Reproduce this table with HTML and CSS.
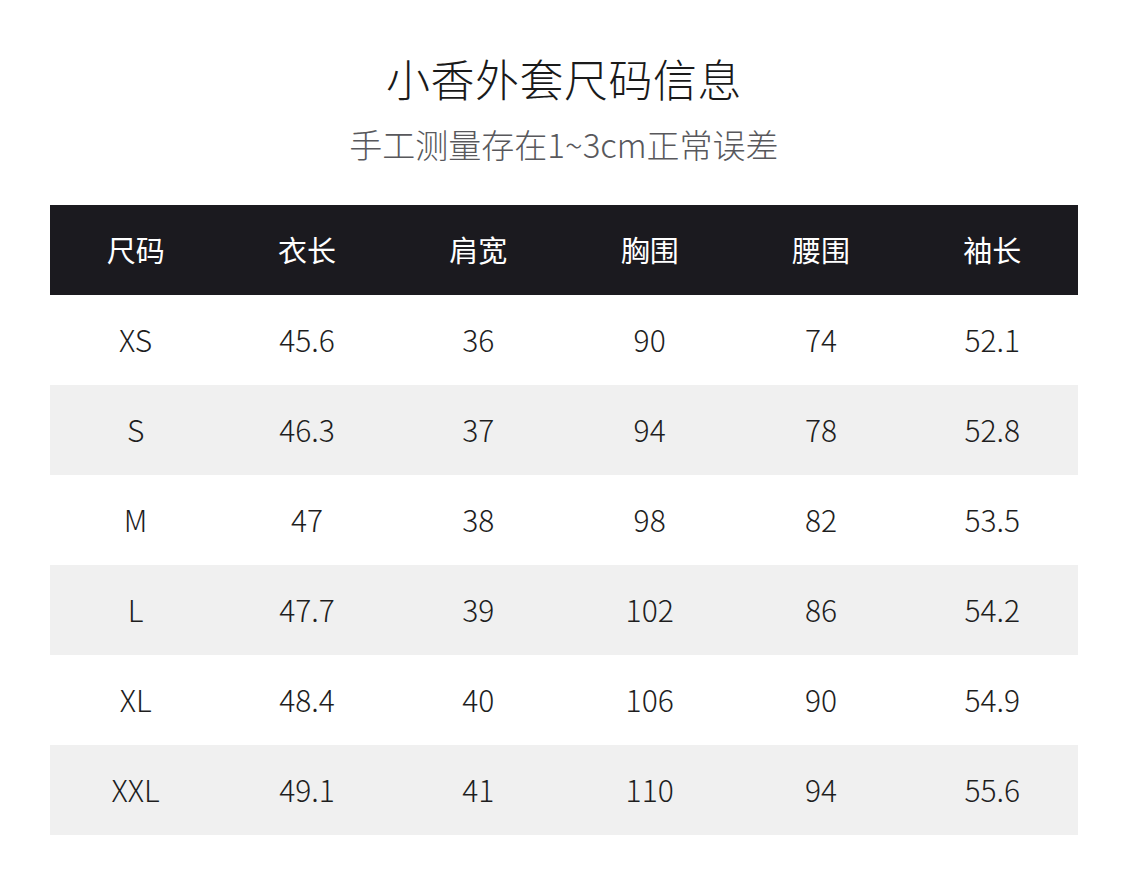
FILE: index.html
```html
<!DOCTYPE html>
<html lang="zh-CN">
<head>
<meta charset="utf-8">
<link rel="stylesheet" href="styles.css">
</head>
<body>
<div class="page">
  <h1 class="title">小香外套尺码信息</h1>
  <p class="subtitle">手工测量存在1~3cm正常误差</p>
  <div class="table">
    <div class="row head"><span>尺码</span><span>衣长</span><span>肩宽</span><span>胸围</span><span>腰围</span><span>袖长</span></div>
    <div class="row"><span>XS</span><span>45.6</span><span>36</span><span>90</span><span>74</span><span>52.1</span></div>
    <div class="row alt"><span>S</span><span>46.3</span><span>37</span><span>94</span><span>78</span><span>52.8</span></div>
    <div class="row"><span>M</span><span>47</span><span>38</span><span>98</span><span>82</span><span>53.5</span></div>
    <div class="row alt"><span>L</span><span>47.7</span><span>39</span><span>102</span><span>86</span><span>54.2</span></div>
    <div class="row"><span>XL</span><span>48.4</span><span>40</span><span>106</span><span>90</span><span>54.9</span></div>
    <div class="row alt"><span>XXL</span><span>49.1</span><span>41</span><span>110</span><span>94</span><span>55.6</span></div>
  </div>
</div>
</body>
</html>
```
FILE: styles.css
```css
html, body {
  margin: 0;
  padding: 0;
  background: #ffffff;
}
body {
  font-family: "Noto Sans CJK SC", "Noto Sans", sans-serif;
  color: #222222;
}
.page {
  width: 1125px;
  height: 882px;
  box-sizing: border-box;
  padding: 50px 47px 0 50px;
}
.title {
  margin: 0;
  text-align: center;
  font-size: 44px;
  font-weight: 300;
  line-height: 56px;
  letter-spacing: 0.5px;
  color: #1a1a1a;
}
.subtitle {
  margin: 16px 0 0;
  text-align: center;
  font-size: 33px;
  font-weight: 300;
  line-height: 44px;
  color: #58585c;
}
.table {
  margin-top: 39px;
  display: flex;
  flex-direction: column;
}
.row {
  display: grid;
  grid-template-columns: repeat(6, 1fr);
  height: 90px;
  box-sizing: border-box;
  padding-bottom: 3px;
  align-items: center;
  text-align: center;
  font-size: 30px;
  font-weight: 300;
  color: #1e1e1e;
}
.row.head {
  background: #1b1a1f;
  color: #ffffff;
  font-weight: 400;
  font-size: 29px;
}
.row.alt {
  background: #f0f0f0;
}
```
